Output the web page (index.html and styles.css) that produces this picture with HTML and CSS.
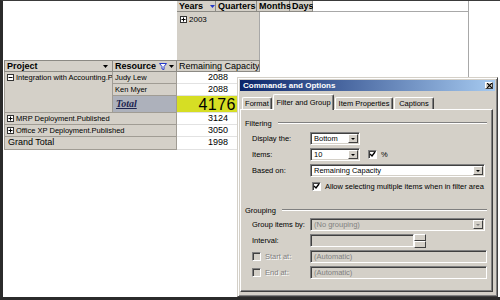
FILE: index.html
```html
<!DOCTYPE html>
<html lang="en">
<head>
    <meta charset="UTF-8">
    <title>PivotTable - Commands and Options</title>
    <link rel="stylesheet" href="styles.css">
</head>
<body>
    <div class="screen">
        <!-- pivot table -->
        <div class="pivot">
            <div class="corner"></div>
            <div class="fields">
                <span class="field f-years">Years <svg class="drop" width="5" height="3" viewBox="0 0 5 3"><path d="M0 0h5L2.5 3z" fill="#2438c8"/></svg></span>
                <span class="field f-quarters">Quarters</span>
                <span class="field f-months">Months</span>
                <span class="field f-days">Days</span>
            </div>
            <div class="data-top"></div>
            <div class="col-item">
                <svg class="pm" width="7" height="7" viewBox="0 0 7 7"><rect x=".5" y=".5" width="6" height="6" fill="#fff" stroke="#333"/><path d="M1.5 3.5h4M3.5 1.5v4" stroke="#000"/></svg>2003
            </div>
            <div class="data-edge"></div>

            <div class="hdr hdr-project">Project <svg class="drop" width="5" height="3" viewBox="0 0 5 3"><path d="M0 0h5L2.5 3z" fill="#000"/></svg></div>
            <div class="hdr hdr-resource">Resource <svg class="funnel" width="8" height="7" viewBox="0 0 8 7"><path d="M.5.5h7L5 3.5v3L3 6V3.5z" fill="#fff" stroke="#2438c8"/></svg><svg class="drop" width="5" height="3" viewBox="0 0 5 3"><path d="M0 0h5L2.5 3z" fill="#000"/></svg></div>
            <div class="hdr hdr-measure">Remaining Capacity</div>

            <div class="member member-project">
                <svg class="pm" width="7" height="7" viewBox="0 0 7 7"><rect x=".5" y=".5" width="6" height="6" fill="#fff" stroke="#333"/><path d="M1.5 3.5h4" stroke="#000"/></svg>Integration with Accounting.Published
            </div>
            <div class="member">Judy Lew</div>
            <div class="num">2088</div>
            <div class="member">Ken Myer</div>
            <div class="num">2088</div>
            <div class="member total">Total</div>
            <div class="num num-hot">4176</div>
            <div class="member span-row">
                <svg class="pm" width="7" height="7" viewBox="0 0 7 7"><rect x=".5" y=".5" width="6" height="6" fill="#fff" stroke="#333"/><path d="M1.5 3.5h4M3.5 1.5v4" stroke="#000"/></svg>MRP Deployment.Published
            </div>
            <div class="num">3124</div>
            <div class="member span-row">
                <svg class="pm" width="7" height="7" viewBox="0 0 7 7"><rect x=".5" y=".5" width="6" height="6" fill="#fff" stroke="#333"/><path d="M1.5 3.5h4M3.5 1.5v4" stroke="#000"/></svg>Office XP Deployment.Published
            </div>
            <div class="num">3050</div>
            <div class="member span-row grand">Grand Total</div>
            <div class="num">1998</div>
        </div>

        <!-- floating window -->
        <div class="dialog">
            <div class="titlebar">
                <span>Commands and Options</span>
                <span class="close"><svg width="5" height="5" viewBox="0 0 5 5"><path d="M0 0l5 5M5 0L0 5" stroke="#000" stroke-width="1.2"/></svg></span>
            </div>
            <div class="tabs">
                <span class="tab t-format">Format</span>
                <span class="tab t-filter active">Filter and Group</span>
                <span class="tab t-item">Item Properties</span>
                <span class="tab t-captions">Captions</span>
            </div>
            <div class="panel">
                <div class="group-title">Filtering<span class="rule"></span></div>
                <div class="form">
                    <label>Display the:</label>
                    <div class="select small">Bottom<span class="btn"></span></div>

                    <label>Items:</label>
                    <div class="line">
                        <div class="select small">10<span class="btn"></span></div>
                        <span class="check on"><svg width="7" height="7" viewBox="0 0 7 7"><path d="M1 3l2 2 3-4" fill="none" stroke="#000" stroke-width="1.4"/></svg></span>
                        <span>%</span>
                    </div>

                    <label>Based on:</label>
                    <div class="select long">Remaining Capacity<span class="btn"></span></div>

                    <span></span>
                    <div class="line allow">
                        <span class="check on"><svg width="7" height="7" viewBox="0 0 7 7"><path d="M1 3l2 2 3-4" fill="none" stroke="#000" stroke-width="1.4"/></svg></span>
                        <span>Allow selecting multiple items when in filter area</span>
                    </div>
                </div>

                <div class="group-title grouping">Grouping<span class="rule"></span></div>
                <div class="form">
                    <label>Group items by:</label>
                    <div class="select long disabled">(No grouping)<span class="btn"></span></div>

                    <label>Interval:</label>
                    <div class="line">
                        <div class="input interval disabled"></div>
                        <span class="spin"><span></span><span></span></span>
                    </div>

                    <label class="line off"><span class="check"></span>Start at:</label>
                    <div class="input full disabled">(Automatic)</div>

                    <label class="line off"><span class="check"></span>End at:</label>
                    <div class="input full disabled">(Automatic)</div>
                </div>
            </div>
        </div>
    </div>
</body>
</html>
```

FILE: styles.css
```css
body {
    margin: 0;
    padding: 0;
}
.screen {
    width: 500px;
    height: 300px;
    box-sizing: border-box;
    border-left: 3px solid #2b2b2b;
    border-top: 1px solid #3a3a3a;
    border-bottom: 3px solid #2b2b2b;
    background-color: #fff;
    position: relative;
    overflow: hidden;
    font-family: "Liberation Sans", Arial, sans-serif;
}

/* pivot table */
.pivot {
    display: grid;
    grid-template-columns: 109px 64px 83px 53px 156px;
    grid-template-rows: 11px 48px 12px 12px 12px 17px 12px 12px 13px;
    margin-left: 1px;
}
.pivot > div {
    box-sizing: border-box;
    overflow: hidden;
    white-space: nowrap;
}
.corner {
    grid-area: 1 / 1 / 3 / 3;
}
.fields {
    grid-area: 1 / 3 / 2 / 5;
    display: flex;
    background-color: #d4d0c8;
}
.field {
    box-sizing: border-box;
    display: flex;
    align-items: center;
    padding-left: 2px;
    font-size: 9px;
    font-weight: bold;
    border-right: 1px solid #8c8a84;
    border-bottom: 1px solid #8c8a84;
}
.f-years { width: 39px; }
.f-quarters { width: 41px; }
.f-months { width: 33px; }
.f-days { width: 23px; }
.f-years .drop {
    margin-left: 7px;
}
.data-top {
    grid-area: 1 / 5;
    border-bottom: 1px solid #a8a8a8;
    border-right: 1px solid #a8a8a8;
}
.data-edge {
    grid-area: 2 / 5 / 10 / 6;
    border-right: 1px solid #a8a8a8;
}
.col-item {
    grid-area: 2 / 3;
    background-color: #d4d0c8;
    border-right: 1px solid #a8a8a8;
    padding: 3px 0 0 3px;
    font-size: 8px;
}
.pm {
    vertical-align: -1px;
    margin-right: 2px;
}
.hdr {
    grid-row: 3;
    display: flex;
    align-items: center;
    background-color: #d4d0c8;
    border: 1px solid #8c8a84;
    border-left: 0;
    padding-left: 2px;
    font-size: 9px;
    font-weight: bold;
}
.hdr-project {
    grid-column: 1;
    border-left: 1px solid #8c8a84;
}
.hdr-project .drop {
    margin-left: auto;
    margin-right: 4px;
}
.hdr-resource {
    grid-column: 2;
}
.hdr-resource .funnel {
    margin-left: 3px;
    margin-right: 2px;
}
.hdr-measure {
    grid-column: 3;
    font-weight: normal;
}
.member {
    grid-column: 2;
    background-color: #d4d0c8;
    border-right: 1px solid #a09c94;
    border-bottom: 1px solid #a09c94;
    padding-left: 2px;
    font-size: 7.5px;
    line-height: 11px;
}
.member-project {
    grid-column: 1;
    grid-row: span 3;
    border-left: 1px solid #a09c94;
    line-height: 12px;
}
.span-row {
    grid-column: 1 / 3;
    border-left: 1px solid #a09c94;
}
.total {
    background-color: #adb1bb;
    color: #1c2450;
    font-family: "Liberation Serif", "Times New Roman", serif;
    font-size: 10px;
    font-style: italic;
    font-weight: bold;
    text-decoration: underline;
    line-height: 15px;
    padding-left: 3px;
}
.grand {
    font-size: 9px;
    padding-left: 3px;
}
.num {
    grid-column: 3;
    text-align: right;
    padding-right: 32px;
    font-size: 9px;
    line-height: 11px;
    border-bottom: 1px solid #e2e2e2;
}
.num-hot {
    background-color: #d6de24;
    font-size: 16px;
    line-height: 17px;
    padding-right: 24px;
    letter-spacing: 0.5px;
}

/* dialog window */
.dialog {
    position: absolute;
    left: 234px;
    top: 76px;
    width: 261px;
    height: 220px;
    box-sizing: border-box;
    display: flex;
    flex-direction: column;
    padding: 2px;
    background-color: #d4d0c8;
    border: 1px solid;
    border-color: #d4d0c8 #404040 #404040 #d4d0c8;
    box-shadow: inset 1px 1px #fff, inset -1px -1px #808080;
    font-size: 7.5px;
    color: #000;
}
.titlebar {
    height: 11px;
    display: flex;
    align-items: center;
    padding: 0 2px 0 3px;
    background: linear-gradient(to right, #0a246a, #a6caf0);
    color: #fff;
    font-size: 8px;
    font-weight: bold;
}
.close {
    margin-left: auto;
    width: 8px;
    height: 7px;
    box-sizing: border-box;
    display: flex;
    align-items: center;
    justify-content: center;
    background-color: #d4d0c8;
    border: 1px solid;
    border-color: #fff #404040 #404040 #fff;
}
.tabs {
    display: flex;
    align-items: flex-end;
    gap: 1px;
    height: 15px;
    margin-top: 3px;
    padding-left: 2px;
}
.tab {
    box-sizing: border-box;
    height: 12px;
    display: flex;
    align-items: center;
    justify-content: center;
    background-color: #d4d0c8;
    border: 1px solid;
    border-color: #fff #404040 transparent #fff;
    border-bottom: 0;
    border-radius: 2px 2px 0 0;
    box-shadow: inset -1px 0 #808080;
}
.t-format { width: 30px; }
.t-filter { width: 61px; }
.t-item { width: 58px; }
.t-captions { width: 40px; }
.tab.active {
    height: 16px;
    margin-bottom: -1px;
    position: relative;
    z-index: 1;
}
.panel {
    flex: 1;
    margin: 0 2px 2px 0;
    padding: 8px 5px 0 4px;
    border: 1px solid;
    border-color: #fff #404040 #404040 #fff;
    box-shadow: inset -1px -1px #808080;
}
.group-title {
    display: flex;
    align-items: center;
    gap: 6px;
    height: 10px;
}
.group-title .rule {
    flex: 1;
    border-top: 1px solid #808080;
    border-bottom: 1px solid #fff;
}
.grouping {
    margin-top: 12px;
}
.form {
    display: grid;
    grid-template-columns: 58px auto;
    grid-auto-rows: 13px;
    row-gap: 3px;
    align-items: center;
    justify-items: start;
    margin: 4px 0 0 7px;
}
.grouping + .form {
    margin-top: 3px;
}
.line {
    display: flex;
    align-items: center;
}
.select,
.input {
    box-sizing: border-box;
    height: 13px;
    display: flex;
    align-items: center;
    padding-left: 3px;
    background-color: #fff;
    border: 1px solid;
    border-color: #808080 #fff #fff #808080;
    box-shadow: inset 1px 1px #404040, inset -1px -1px #d4d0c8;
}
.select .btn {
    margin-left: auto;
    margin-right: 1px;
    width: 10px;
    height: 9px;
    box-sizing: border-box;
    display: flex;
    align-items: center;
    justify-content: center;
    background-color: #d4d0c8;
    border: 1px solid;
    border-color: #fff #404040 #404040 #fff;
}
.select .btn::after {
    content: "";
    border-left: 2px solid transparent;
    border-right: 2px solid transparent;
    border-top: 2px solid #000;
}
.small { width: 50px; }
.long { width: 175px; }
.input.full { width: 177px; }
.input.interval { width: 104px; }
.disabled {
    background-color: #d4d0c8;
    color: #808080;
}
.disabled .btn::after {
    border-top-color: #808080;
}
.spin {
    display: flex;
    flex-direction: column;
    width: 12px;
    height: 14px;
}
.spin span {
    flex: 1;
    box-sizing: border-box;
    background-color: #d4d0c8;
    border: 1px solid;
    border-color: #fff #404040 #404040 #fff;
}
.check {
    box-sizing: border-box;
    width: 9px;
    height: 9px;
    display: flex;
    align-items: center;
    justify-content: center;
    background-color: #fff;
    border: 1px solid;
    border-color: #808080 #fff #fff #808080;
    box-shadow: inset 1px 1px #404040;
    margin-right: 4px;
}
.line .select + .check {
    margin-left: 8px;
}
.allow .check {
    margin-left: 2px;
}
.off {
    color: #808080;
    text-shadow: 1px 1px #fff;
}
.off .check {
    background-color: #d4d0c8;
}
```
